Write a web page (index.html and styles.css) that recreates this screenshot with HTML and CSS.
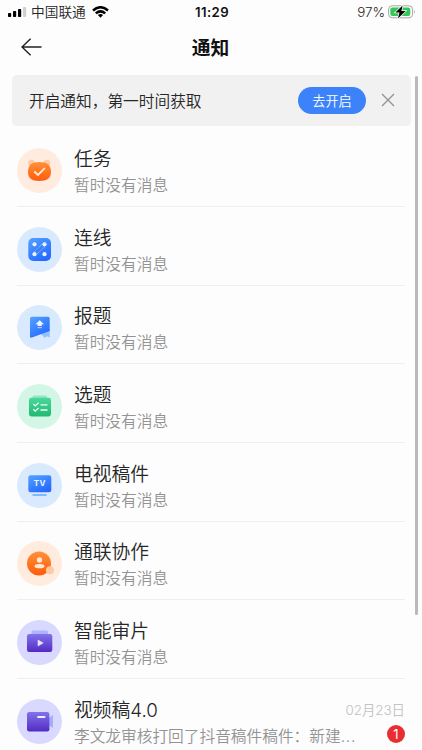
FILE: index.html
```
<!DOCTYPE html>
<html lang="zh-CN">
  <head>
    <meta charset="UTF-8" />
    <meta name="viewport" content="width=device-width, initial-scale=1.0" />
    <title>通知</title>
    <link rel="stylesheet" href="styles.css">
  </head>
  <body>
    <div class="status-bar">
      <div class="status-left">
        <svg class="signal" width="20" height="10" viewBox="0 0 20 10">
          <rect x="0" y="6" width="3.2" height="4" rx="0.8" />
          <rect x="5" y="4" width="3.2" height="6" rx="0.8" />
          <rect x="10" y="2" width="3.2" height="8" rx="0.8" />
          <rect x="15" y="0" width="3.2" height="10" rx="0.8" fill="#d0d0d0" />
        </svg>
        <span class="carrier">中国联通</span>
        <svg width="17" height="12" viewBox="0 0 17 12" fill="none" stroke="#000" stroke-width="2.5">
          <path d="M1 4.5Q8.5 -2 16 4.5" />
          <path d="M3.8 7.4Q8.5 3.4 13.2 7.4" />
          <path d="M8.5 11.7L5.9 9.1Q8.5 7 11.1 9.1Z" fill="#000" stroke="none" />
        </svg>
      </div>
      <div class="status-time">11:29</div>
      <div class="status-right">
        <span>97%</span>
        <svg width="28" height="14" viewBox="0 0 28 14">
          <rect x="0.6" y="0.8" width="24" height="12" rx="3.6" fill="#fff" stroke="#a5a5a5" />
          <rect x="2.3" y="2.5" width="20" height="8.6" rx="2" fill="#35c759" />
          <path d="M26 4.8Q27.6 6.8 26 8.8Z" fill="#a5a5a5" />
          <path d="M14.6 0.4L7.4 7.6H11.4L10 13.6L17.6 6H13.4Z" fill="#000" stroke="#fff" stroke-width="1.4" paint-order="stroke" />
        </svg>
      </div>
    </div>

    <header class="nav">
      <svg class="back" width="21" height="18" viewBox="0 0 21 18">
        <path d="M9.6 0.8L1 9L9.6 17.2M1 9H20.5" />
      </svg>
      <h1 class="nav-title">通知</h1>
    </header>

    <div class="banner">
      <span class="banner-text">开启通知，第一时间获取</span>
      <button class="open-btn">去开启</button>
      <svg class="close" width="14" height="14" viewBox="0 0 14 14">
        <path d="M1 1L13 13M13 1L1 13" />
      </svg>
    </div>

    <svg class="defs" width="0" height="0">
      <defs>
        <linearGradient id="orange" x1="0" y1="0" x2="0" y2="1">
          <stop offset="0" stop-color="#ff9138" />
          <stop offset="1" stop-color="#ff5b0a" />
        </linearGradient>
        <linearGradient id="blue" x1="0" y1="0" x2="0.6" y2="1">
          <stop offset="0" stop-color="#55a3ff" />
          <stop offset="1" stop-color="#266aff" />
        </linearGradient>
        <linearGradient id="green" x1="0" y1="0" x2="0" y2="1">
          <stop offset="0" stop-color="#4bd79c" />
          <stop offset="1" stop-color="#21b973" />
        </linearGradient>
        <linearGradient id="purple" x1="0" y1="0" x2="0" y2="1">
          <stop offset="0" stop-color="#8173ea" />
          <stop offset="1" stop-color="#532bc3" />
        </linearGradient>
      </defs>
    </svg>

    <ul class="list">
      <li class="item">
        <svg class="avatar avatar-orange" viewBox="0 0 45 45">
          <circle cx="14.5" cy="15" r="3.3" fill="#ffcaa5" />
          <circle cx="30" cy="15" r="3.3" fill="#ffcaa5" />
          <path d="M22.3 14C30 14 34 17 34 23.8C34 30.5 30 33 22.3 33S11 30.5 11 23.8C11 17 15 14 22.3 14Z" fill="url(#orange)" />
          <path d="M17.3 23.5L21 27L27.8 20.2" fill="none" stroke="#ffeadc" stroke-width="1.8" />
        </svg>
        <div class="content">
          <div class="title">任务</div>
          <div class="desc">暂时没有消息</div>
        </div>
      </li>
      <li class="item">
        <svg class="avatar avatar-blue" viewBox="0 0 45 45">
          <rect x="11.3" y="11" width="22.7" height="23" rx="5" fill="url(#blue)" />
          <path d="M17.3 24.5L25.5 16.8M20 27L28.2 19.5" stroke="#9fc8ff" stroke-width="0.9" stroke-dasharray="1 0.6" />
          <circle cx="17.5" cy="17.3" r="2.1" fill="#e9f3ff" />
          <circle cx="27.5" cy="17.3" r="2.1" fill="#e9f3ff" />
          <circle cx="17.5" cy="27.2" r="2.1" fill="#e9f3ff" />
          <circle cx="27.5" cy="27.2" r="2.1" fill="#e9f3ff" />
        </svg>
        <div class="content">
          <div class="title">连线</div>
          <div class="desc">暂时没有消息</div>
        </div>
      </li>
      <li class="item">
        <svg class="avatar avatar-blue" viewBox="0 0 45 45">
          <path d="M24 29L32.7 24V32.5L30 31.2L27.5 32.7Z" fill="#8ec2ff" />
          <path d="M15 11.7H31Q32.7 11.7 32.7 13.4V26L15 32.6Q13 33.2 13 31.4V13.7Q13 11.7 15 11.7Z" fill="url(#blue)" />
          <path d="M22.7 15.3L27 19.2H24.8V21H20.6V19.2H18.4Z" fill="#eaf3ff" />
          <rect x="20.6" y="22" width="4.2" height="1.2" fill="#a9ccff" />
        </svg>
        <div class="content">
          <div class="title">报题</div>
          <div class="desc">暂时没有消息</div>
        </div>
      </li>
      <li class="item">
        <svg class="avatar avatar-green" viewBox="0 0 45 45">
          <rect x="15.5" y="11.4" width="14.5" height="6" rx="1.6" fill="#96e5c1" />
          <rect x="12" y="13.8" width="22" height="18.6" rx="2.4" fill="url(#green)" />
          <path d="M16.3 20L18.2 21.9L21.6 18.7M16.3 25.3L18.2 27.2L21.6 24M23.5 20.8H30.5M23.5 26H30.5" fill="none" stroke="#e4fff2" stroke-width="1.3" />
        </svg>
        <div class="content">
          <div class="title">选题</div>
          <div class="desc">暂时没有消息</div>
        </div>
      </li>
      <li class="item">
        <svg class="avatar avatar-blue" viewBox="0 0 45 45">
          <rect x="15.3" y="31" width="14.6" height="2" rx="1" fill="#80b9ff" />
          <rect x="11.3" y="12.2" width="23" height="17" rx="2.2" fill="url(#blue)" />
          <text class="tv-text" x="22.9" y="23.4">TV</text>
        </svg>
        <div class="content">
          <div class="title">电视稿件</div>
          <div class="desc">暂时没有消息</div>
        </div>
      </li>
      <li class="item">
        <svg class="avatar avatar-orange" viewBox="0 0 45 45">
          <circle cx="22" cy="22.4" r="12" fill="url(#orange)" />
          <circle cx="33" cy="29.3" r="4" fill="#ffc9a4" />
          <circle cx="22.5" cy="19" r="2.7" fill="#ffe7d8" />
          <ellipse cx="22.5" cy="25.2" rx="4.9" ry="2.1" fill="#ffe7d8" />
        </svg>
        <div class="content">
          <div class="title">通联协作</div>
          <div class="desc">暂时没有消息</div>
        </div>
      </li>
      <li class="item">
        <svg class="avatar avatar-purple" viewBox="0 0 45 45">
          <rect x="14.5" y="10.4" width="16.5" height="6" rx="1.6" fill="#aeb4ff" />
          <rect x="10" y="14" width="25.3" height="18" rx="2.2" fill="url(#purple)" />
          <path d="M21 20L26.2 23L21 26Z" fill="#e7e3ff" stroke="#e7e3ff" stroke-width="0.6" stroke-linejoin="round" />
        </svg>
        <div class="content">
          <div class="title">智能审片</div>
          <div class="desc">暂时没有消息</div>
        </div>
      </li>
      <li class="item">
        <svg class="avatar avatar-purple" viewBox="0 0 45 45">
          <path d="M32 19L36 16V29L32 26.5Z" fill="#a6adff" />
          <rect x="10" y="13" width="22.4" height="19.5" rx="2.2" fill="url(#purple)" />
          <rect x="20.3" y="17" width="8" height="2" rx="0.5" fill="#efecff" />
        </svg>
        <div class="content">
          <div class="title-row">
            <div class="title">视频稿4.0</div>
            <span class="date">02月23日</span>
          </div>
          <div class="desc-row">
            <div class="desc">李文龙审核打回了抖音稿件稿件：新建<span class="dots">...</span></div>
            <span class="count">1</span>
          </div>
        </div>
      </li>
    </ul>
    <div class="scrollbar"></div>
  </body>
</html>
```
FILE: styles.css
```
* {
  box-sizing: border-box;
}
body {
  margin: 0;
  height: 750px;
  overflow: hidden;
  background: #fdfdfd;
  color: #262626;
  font-family: "Inter", "Noto Sans CJK SC", "Noto Sans CJK SC DemiLight", sans-serif;
  font-weight: 350;
}
svg {
  display: block;
  flex: none;
}
.status-bar {
  display: grid;
  grid-template-columns: 1fr auto 1fr;
  align-items: center;
  height: 24px;
  padding: 0 6px 0 8px;
  font-size: 13.4px;
  line-height: 24px;
}
.status-left,
.status-right {
  display: flex;
  align-items: center;
}
.carrier {
  margin: 0 6px 0 3px;
  font-size: 13.7px;
}
.status-time {
  color: #111;
  font-weight: 600;
  font-size: 13.2px;
  letter-spacing: 0.4px;
}
.status-right {
  justify-content: flex-end;
  gap: 3px;
}
.nav {
  display: grid;
  grid-template-columns: 1fr auto 1fr;
  align-items: center;
  height: 50.5px;
  padding: 0 22px 4px 21px;
}
.back,
.close {
  fill: none;
  stroke: #222;
  stroke-width: 1.4;
}
.nav-title {
  margin: 0;
  padding-top: 3px;
  color: #111;
  font-size: 18.8px;
  font-weight: 600;
  line-height: 28px;
}
.banner {
  display: flex;
  align-items: center;
  width: 399px;
  height: 51.5px;
  margin-left: 12px;
  padding: 0 16px 0 17px;
  border-radius: 5px;
  background: #f1f1f1;
}
.banner-text {
  flex: 1;
  font-size: 15.7px;
}
.open-btn {
  width: 68px;
  height: 27px;
  margin-right: 15px;
  padding: 0;
  border: 0;
  border-radius: 14px;
  background: #3c83fb;
  color: #fff;
  font-family: inherit;
  font-size: 13.2px;
  font-weight: inherit;
}
.close {
  stroke: #949494;
}
.defs {
  height: 0;
}
.list {
  margin: 0;
  padding: 2.4px 17px 0;
  list-style: none;
}
.item {
  display: flex;
  align-items: center;
  gap: 12px;
  height: 78.65px;
  padding-top: 7px;
  border-bottom: 1px solid #efefef;
}
.avatar {
  width: 45px;
  height: 45px;
  border-radius: 50%;
}
.avatar-orange {
  background: #ffecdf;
}
.avatar-blue {
  background: #d9eaff;
}
.avatar-green {
  background: #d3f6e7;
}
.avatar-purple {
  background: #d9d9ff;
}
.tv-text {
  fill: #eaf3ff;
  font-size: 8px;
  font-weight: 700;
  letter-spacing: 0.4px;
  text-anchor: middle;
}
.content {
  flex: 1;
  min-width: 0;
  padding-top: 4px;
}
.title {
  font-size: 18.8px;
  line-height: 27px;
}
.desc {
  color: #939393;
  font-size: 15.7px;
  line-height: 26px;
  white-space: nowrap;
}
.title-row,
.desc-row {
  display: flex;
  align-items: center;
  justify-content: space-between;
}
.dots {
  letter-spacing: 0.7px;
}
.date {
  margin-bottom: 3px;
  color: #c2c2c2;
  font-size: 13.4px;
}
.count {
  width: 18px;
  height: 18px;
  margin-bottom: 5px;
  border-radius: 50%;
  background: #e92e31;
  color: #fff;
  font-size: 13px;
  font-weight: 400;
  line-height: 18px;
  text-align: center;
}
.scrollbar {
  position: absolute;
  top: 76px;
  right: 4px;
  width: 3px;
  height: 539px;
  border-radius: 2px;
  background: #b9b9b9;
}
```
